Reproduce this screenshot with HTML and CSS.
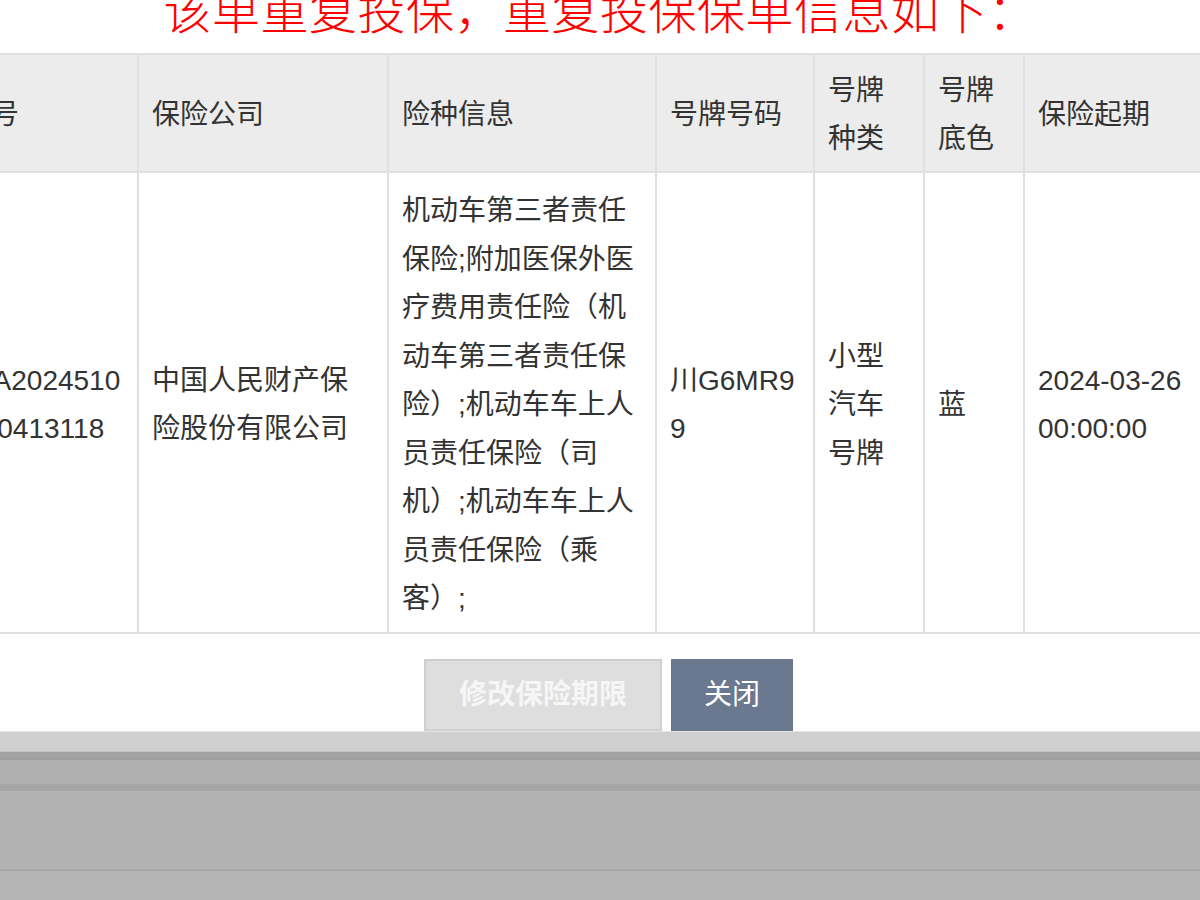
FILE: index.html
```html
<!DOCTYPE html>
<html lang="zh-CN">
<head>
<meta charset="utf-8">
<title>重复投保</title>
<link rel="stylesheet" href="styles.css">
</head>
<body>
<div class="screen">
  <div class="dialog">
    <h1 class="title">该单重复投保，重复投保保单信息如下：</h1>
    <div class="table-clip">
      <table class="policy-table">
        <colgroup>
          <col class="c-no">
          <col class="c-company">
          <col class="c-kind">
          <col class="c-plate">
          <col class="c-ptype">
          <col class="c-pcolor">
          <col class="c-start">
        </colgroup>
        <thead>
          <tr>
            <th>保单号</th>
            <th>保险公司</th>
            <th>险种信息</th>
            <th>号牌号码</th>
            <th>号牌种类</th>
            <th>号牌底色</th>
            <th>保险起期</th>
          </tr>
        </thead>
        <tbody>
          <tr>
            <td class="nowrap">PDAA2024510<br>10000413118</td>
            <td>中国人民财产保险股份有限公司</td>
            <td>机动车第三者责任保险;附加医保外医疗费用责任险（机动车第三者责任保险）;机动车车上人员责任保险（司机）;机动车车上人员责任保险（乘客）;</td>
            <td class="nowrap">川G6MR9<br>9</td>
            <td>小型汽车号牌</td>
            <td>蓝</td>
            <td>2024-03-26 00:00:00</td>
          </tr>
        </tbody>
      </table>
    </div>
    <div class="actions">
      <button class="btn btn-muted" type="button">修改保险期限</button>
      <button class="btn btn-close" type="button">关闭</button>
    </div>
  </div>
  <div class="backdrop">
    <div class="band band-light"></div>
    <div class="band band-dark"></div>
    <div class="band band-darker"></div>
    <div class="band band-mid"></div>
    <div class="band band-rule"></div>
    <div class="band band-wide"></div>
    <div class="band band-thin"></div>
    <div class="band band-rest"></div>
  </div>
</div>
</body>
</html>
```
FILE: styles.css
```css
html, body {
  margin: 0;
  padding: 0;
  overflow: hidden;
  background: #ffffff;
}

body {
  font-family: "Liberation Sans", "Noto Sans CJK SC", sans-serif;
  color: #333333;
}

.screen {
  width: 1200px;
  height: 900px;
  overflow: hidden;
  display: flex;
  flex-direction: column;
}

.dialog {
  background: #ffffff;
  overflow: hidden;
  flex: none;
}

.title {
  margin: -16px 0 0;
  height: 69px;
  font-size: 48px;
  line-height: 48px;
  font-weight: 300;
  letter-spacing: 0.5px;
  color: #ff0000;
  text-align: center;
  font-family: "Noto Sans CJK SC", sans-serif;
}

.table-clip {
  overflow: hidden;
}

.policy-table {
  margin-left: -80px;
  border-collapse: collapse;
  table-layout: fixed;
  width: 1353px;
  font-size: 28px;
}

.c-no { width: 217px; }
.c-company { width: 250px; }
.c-kind { width: 268px; }
.c-plate { width: 158px; }
.c-ptype { width: 110px; }
.c-pcolor { width: 100px; }
.c-start { width: 250px; }

.policy-table th,
.policy-table td {
  border: 2px solid #e0e0e0;
  text-align: left;
  vertical-align: middle;
  font-weight: normal;
}

.policy-table th {
  background: #ececec;
  padding: 12px 15px 8px 13px;
  line-height: 48px;
}

.policy-table td {
  background: #ffffff;
  padding: 14px 15px 8px 13px;
  line-height: 48.5px;
}

.policy-table td.nowrap {
  white-space: nowrap;
}

.actions {
  display: flex;
  justify-content: center;
  gap: 9px;
  padding: 25px 0 0 17px;
  border-bottom: 1px solid #e4e4e4;
}

.btn {
  height: 72px;
  margin: 0;
  font-family: "Liberation Sans", "Noto Sans CJK SC", sans-serif;
  font-size: 28px;
  line-height: 1;
  cursor: pointer;
}

.btn-muted {
  padding: 0 33px;
  background: #dedede;
  border: 2px solid #cfcfcf;
  color: #f6f6f6;
  font-weight: bold;
}

.btn-close {
  padding: 0 31px;
  background: #6a7890;
  border: 2px solid #6a7890;
  color: #ffffff;
  font-weight: normal;
}

.backdrop {
  flex: 1;
  background: #b4b4b4;
}

.band { height: 0; }
.band-light { height: 19px; background: #d0d0d0; }
.band-dark { height: 1px; background: #c4c4c4; }
.band-darker { height: 6px; background: #a3a3a3; border-bottom: 2px solid #9e9e9e; }
.band-mid { height: 24px; background: #b0b0b0; }
.band-rule { height: 7px; background: #a5a5a5; }
.band-wide { height: 78px; background: #b2b2b2; }
.band-thin { height: 2px; background: #a8a8a8; }
.band-rest { height: 29px; background: #b4b4b4; }
```
